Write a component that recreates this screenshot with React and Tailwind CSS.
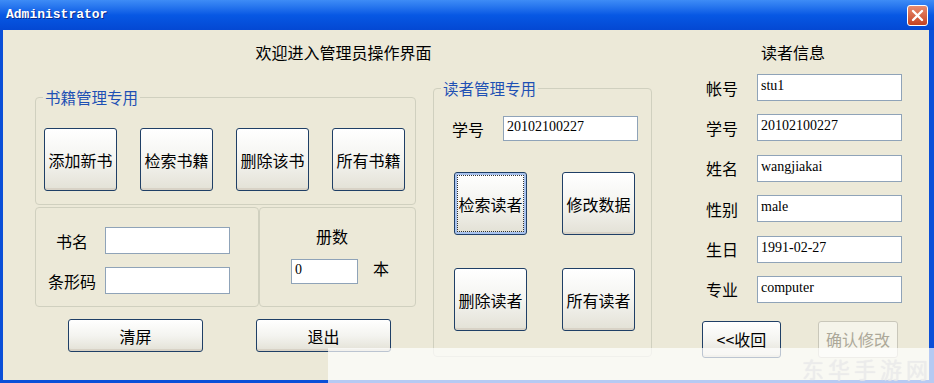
import React from "react";

const cjk = "font-['Noto_Sans_CJK_SC',sans-serif]";

function XpButton({ className = "", focused, disabled, children }) {
  if (disabled) {
    return (
      <button
        disabled
        className={`rounded-[3px] border border-[#C9C7BA] bg-[#F5F4EA] text-[16px] leading-[20px] text-[#ACA899] ${className}`}
      >
        {children}
      </button>
    );
  }
  if (focused) {
    return (
      <button
        className={`rounded-[3px] border border-[#1F3F66] bg-linear-to-b from-[#FFFFFF] via-[#F3F3EF] to-[#E2E0D4] p-[2px] shadow-[inset_0_0_0_2px_#A9C3EE] text-[16px] leading-[20px] text-black ${className}`}
      >
        <div className="flex h-full w-full items-center justify-center border border-dotted border-[#333]">
          {children}
        </div>
      </button>
    );
  }
  return (
    <button
      className={`rounded-[3px] border border-[#1F3F66] bg-linear-to-b from-[#FFFFFF] via-[#F4F4F0] to-[#E3E1D6] shadow-[inset_0_-2px_0_#D8D2C6] text-[16px] leading-[20px] text-black ${className}`}
    >
      {children}
    </button>
  );
}

function Field({ value = "", className = "" }) {
  return (
    <input
      readOnly
      value={value}
      className={`border border-[#8FA3B8] bg-white pl-[3px] pb-[3px] font-['Liberation_Serif',serif] text-[14px] text-black outline-none ${className}`}
    />
  );
}

function Group({ title, className = "", children }) {
  return (
    <fieldset className={`rounded-[4px] border border-[#D0D0BF] ${className}`}>
      <legend className="ml-[7px] px-[2px] text-[15.5px] leading-[18px] text-[#1E50B4]">
        {title}
      </legend>
      {children}
    </fieldset>
  );
}

const readerRows = [
  ["帐号", "stu1"],
  ["学号", "20102100227"],
  ["姓名", "wangjiakai"],
  ["性别", "male"],
  ["生日", "1991-02-27"],
  ["专业", "computer"],
];

export default function App() {
  return (
    <div className={`relative flex h-[383px] w-[934px] flex-col overflow-hidden bg-[#0A4FD8] ${cjk}`}>
      {/* Title bar */}
      <div className="flex h-[30px] items-center justify-between bg-linear-to-b from-[#3E8CF6] via-[#0758E4] to-[#0448D3] pl-[6px] pr-[6px]">
        <span className="font-['Liberation_Mono',monospace] text-[13px] font-bold text-white [text-shadow:1px_1px_0_#0A2A8A]">
          Administrator
        </span>
        <button className="flex h-[21px] w-[21px] items-center justify-center rounded-[3px] border border-white bg-linear-to-b from-[#E88B6E] to-[#C4411F]">
          <svg width="13" height="13" viewBox="0 0 13 13">
            <path d="M2 2L11 11M11 2L2 11" stroke="white" strokeWidth="2.4" strokeLinecap="round" />
          </svg>
        </button>
      </div>

      {/* Body */}
      <div className="mb-[3px] ml-[3px] mr-[5px] flex flex-1 bg-[#ECE9D8] pl-[32px]">
        {/* Left area: book + reader management */}
        <div className="flex w-[617px] flex-col">
          <div className="mt-[12px] text-center text-[16px] leading-[20px] text-black">
            欢迎进入管理员操作界面
          </div>
          <div className="flex items-start gap-[17px]">
            {/* Book management */}
            <div className="mt-[26px] flex w-[381px] flex-col">
              <Group title="书籍管理专用">
                <div className="flex gap-[23px] pb-[13px] pl-[8px] pt-[22px]">
                  {["添加新书", "检索书籍", "删除该书", "所有书籍"].map((t) => (
                    <XpButton key={t} className="h-[63px] w-[73px]">
                      {t}
                    </XpButton>
                  ))}
                </div>
              </Group>
              <div className="mt-[2px] flex">
                <div className="flex h-[100px] w-[224px] flex-col gap-[13px] rounded-[4px] border border-[#D0D0BF] pl-[9px] pt-[19px]">
                  <div className="flex items-center">
                    <span className="w-[54px] text-center text-[16px] leading-[20px]">书名</span>
                    <Field className="ml-[6px] h-[27px] w-[125px]" />
                  </div>
                  <div className="flex items-center">
                    <span className="w-[54px] text-center text-[16px] leading-[20px]">条形码</span>
                    <Field className="ml-[6px] h-[27px] w-[125px]" />
                  </div>
                </div>
                <div className="flex h-[100px] w-[157px] flex-col rounded-[4px] border border-[#D0D0BF] pt-[18px]">
                  <span className="ml-[56px] text-[16px] leading-[20px]">册数</span>
                  <div className="mt-[13px] flex items-start">
                    <Field value="0" className="ml-[31px] h-[25px] w-[67px]" />
                    <span className="-mt-[1px] ml-[15px] text-[16px] leading-[20px]">本</span>
                  </div>
                </div>
              </div>
              <div className="mt-[12px] flex">
                <XpButton className="ml-[33px] h-[33px] w-[135px]">清屏</XpButton>
                <XpButton className="ml-[53px] h-[33px] w-[135px]">退出</XpButton>
              </div>
            </div>

            {/* Reader management */}
            <Group title="读者管理专用" className="mt-[17px] w-[219px]">
              <div className="flex flex-col pb-[25px] pt-[19px]">
                <div className="flex items-center pl-[18px]">
                  <span className="text-[16px] leading-[20px]">学号</span>
                  <Field value="20102100227" className="ml-[19px] h-[25px] w-[135px]" />
                </div>
                <div className="mt-[31px] grid grid-cols-[73px_73px] gap-x-[35px] gap-y-[33px] pl-[20px]">
                  <XpButton focused className="h-[63px] w-[73px]">检索读者</XpButton>
                  <XpButton className="h-[63px] w-[73px]">修改数据</XpButton>
                  <XpButton className="h-[63px] w-[73px]">删除读者</XpButton>
                  <XpButton className="h-[63px] w-[73px]">所有读者</XpButton>
                </div>
              </div>
            </Group>
          </div>
        </div>

        {/* Reader info */}
        <div className="ml-[50px] flex w-[200px] flex-col">
          <div className="mt-[12px] pl-[59px] text-[16px] leading-[20px]">读者信息</div>
          <div className="mt-[12px] flex flex-col gap-[13.4px]">
            {readerRows.map(([label, value]) => (
              <div key={label} className="flex h-[27px] items-center">
                <span className="w-[55px] pl-[4px] text-[16px] leading-[20px]">{label}</span>
                <Field value={value} className="h-[27px] w-[145px]" />
              </div>
            ))}
          </div>
          <div className="mt-[18px] flex">
            <XpButton className="h-[37px] w-[79px]">&lt;&lt;收回</XpButton>
            <XpButton disabled className="ml-[37px] h-[37px] w-[80px]">
              确认修改
            </XpButton>
          </div>
        </div>
      </div>

      {/* Watermark strip over the bottom edge */}
      <div className="absolute left-[328px] top-[348px] flex h-[35px] w-[606px] items-end justify-end bg-white/70 pr-[2px]">
        <span className="text-[22px] leading-[30px] tracking-[4px] text-[#EDEDED]/80 [text-shadow:0_0_1px_#e6e6e6]">
          东华手游网
        </span>
      </div>
    </div>
  );
}
